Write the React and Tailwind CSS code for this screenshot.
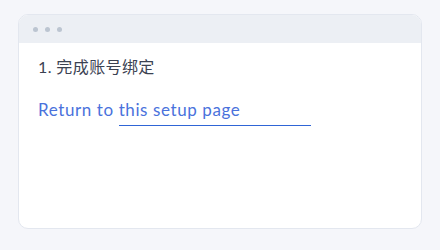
export default function App() {
  return (
    <div className="w-[440px] h-[250px] bg-[#f5f6fa] pt-[14px] pl-[18px] font-['Lato','Noto_Sans_CJK_SC',sans-serif]">
      <div className="w-[404px] h-[215px] bg-white border border-[#e3e7ef] rounded-[10px] overflow-hidden">
        <div className="h-[28px] bg-[#eceff4] flex items-center gap-[7px] pl-[14px]">
          <span className="w-[5px] h-[5px] rounded-full bg-[#bcc5d1]" />
          <span className="w-[5px] h-[5px] rounded-full bg-[#bcc5d1]" />
          <span className="w-[5px] h-[5px] rounded-full bg-[#bcc5d1]" />
        </div>
        <div className="pl-[19px] pt-[14px]">
          <div className="text-[16px] leading-[20px] text-[#3b4252] tracking-[0.4px]">1. 完成账号绑定</div>
          <div className="mt-[22px] text-[17px] leading-[22px] text-[#4a72dc] tracking-[0.6px]">Return to this setup page</div>
          <div className="ml-[81px] mt-[4px] w-[192px] border-t border-[#2f65d6]" />
        </div>
      </div>
    </div>
  )
}
